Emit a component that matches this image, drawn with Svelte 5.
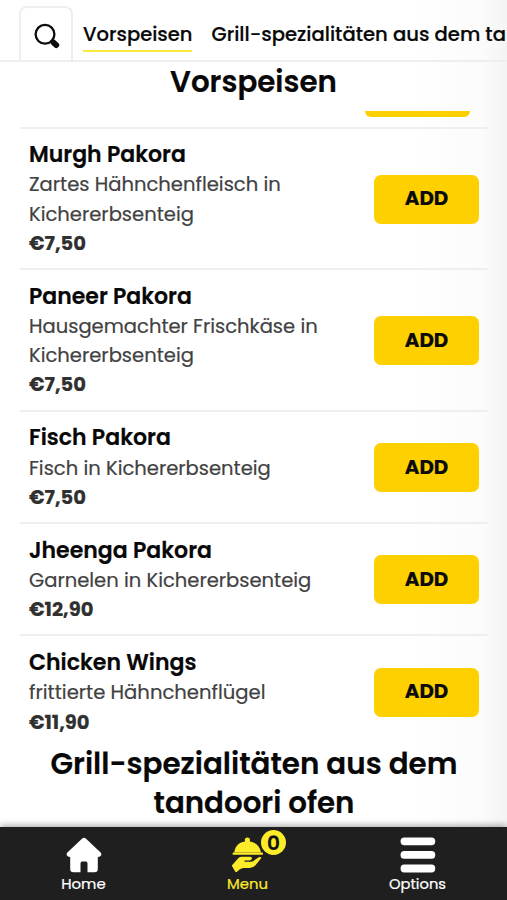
<script>
  const dishes = [
    { name: ['Murgh Pakora', 157], lines: [['Zartes Hähnchenfleisch in', 252], ['Kichererbsenteig', 165]], price: ['€7,50', 57] },
    { name: ['Paneer Pakora', 163], lines: [['Hausgemachter Frischkäse in', 289], ['Kichererbsenteig', 165]], price: ['€7,50', 57] },
    { name: ['Fisch Pakora', 142], lines: [['Fisch in Kichererbsenteig', 242]], price: ['€7,50', 57] },
    { name: ['Jheenga Pakora', 183], lines: [['Garnelen in Kichererbsenteig', 282.5]], price: ['€12,90', 64.5] },
    { name: ['Chicken Wings', 167.5], lines: [['frittierte Hähnchenflügel', 236.5]], price: ['€11,90', 60.5] }
  ];

  // Sizes the letters so that a label fills the given width.
  function fit(node, width) {
    const natural = node.getBoundingClientRect().width;
    const size = parseFloat(getComputedStyle(node).fontSize);
    node.style.fontSize = `${(size * width) / natural}px`;
  }
</script>

{#snippet label(text, width)}<span class="fit" use:fit={width}>{text}</span>{/snippet}

<div class="screen">
  <header>
    <div class="search">
      <svg width="28" height="28" viewBox="0 0 28 28" fill="none" stroke="#0c0c0c" stroke-linecap="round">
        <circle cx="12" cy="12.3" r="9.4" stroke-width="2.3" />
        <path d="M18.8 19l2 2" stroke-width="3" />
        <path d="M20.3 20.3l3 2.8" stroke-width="5.8" />
      </svg>
    </div>
    <nav class="tabs">
      <div class="tab active">{@render label('Vorspeisen', 109.5)}</div>
      <div class="tab">{@render label('Grill-spezialitäten aus dem ta', 294.5)}</div>
    </nav>
  </header>

  <h2 class="current">{@render label('Vorspeisen', 167)}</h2>

  <main>
    <div class="previous"><div class="sliver"></div></div>
    {#each dishes as dish}
      <article>
        <div class="info">
          <h3>{@render label(dish.name[0], dish.name[1])}</h3>
          {#each dish.lines as line}
            <p>{@render label(line[0], line[1])}</p>
          {/each}
          <p class="price">{@render label(dish.price[0], dish.price[1])}</p>
        </div>
        <button>{@render label('ADD', 43.5)}</button>
      </article>
    {/each}
    <h2 class="next">
      {@render label('Grill-spezialitäten aus dem', 407)}
      {@render label('tandoori ofen', 201)}
    </h2>
  </main>

  <footer>
    <div class="item home">
      <svg width="36" height="36" viewBox="0 0 36 36" fill="#fff">
        <path d="M16.2 1.5Q18 0 19.8 1.5L34.6 15.6Q36.2 17.6 34.5 19Q33.6 20 31.8 20V32Q31.8 35.2 28.6 35.2H21.5V26.4Q21.5 24.6 19.8 24.6H16.2Q14.5 24.6 14.5 26.4V35.2H7.4Q4.2 35.2 4.2 32V20Q2.4 20 1.5 19Q-.2 17.6 1.4 15.6Z" />
      </svg>
      {@render label('Home', 44.5)}
    </div>
    <div class="item menu">
      <svg width="34" height="36" viewBox="0 0 34 36" fill="#fdec2a">
        <circle cx="16.4" cy="3" r="2.6" />
        <path d="M3.2 15.6C4 8 9.7 4.3 16.4 4.3S28.8 8 30 15.6Z" />
        <rect x="1.5" y="15.4" width="30.5" height="2.4" rx="1" />
        <path d="M1.3 28L7.5 21.1Q9 19.5 11.5 19.7H19.2Q21.3 20 21 21.6Q20.7 23.3 18.5 23.4H13.5V24.8H20Q22.3 24.7 24 22.8L27.8 20.2Q30.5 19.3 30.3 21L24.5 28.2Q22 31 18.5 31H12.5Q10.4 31 8.6 32.5L5.7 35Q4.8 35.4 4.2 34.5L1.1 29.2Q.8 28.5 1.3 28Z" />
      </svg>
      <span class="badge">0</span>
      {@render label('Menu', 41)}
    </div>
    <div class="item options">
      <svg width="36" height="36" viewBox="0 0 36 36" fill="#fff">
        <rect x=".6" y=".4" width="34.6" height="7.8" rx="3.6" />
        <rect x=".6" y="14" width="34.6" height="7.8" rx="3.6" />
        <rect x=".6" y="27.6" width="34.6" height="7.8" rx="3.6" />
      </svg>
      {@render label('Options', 57)}
    </div>
  </footer>
</div>

<style>
  :global(body) { margin: 0; overflow: hidden; }
  .screen {
    box-sizing: border-box;
    width: 507px;
    height: 900px;
    overflow: hidden;
    display: flex;
    flex-direction: column;
    background: linear-gradient(90deg, #fff 410px, #fbfbfb 482px, #f4f4f4 507px);
    color: #080808;
    font-family: Poppins, Inter, "Open Sans", sans-serif;
    -webkit-text-stroke: 0.2px currentColor;
  }
  .fit { display: block; width: max-content; white-space: nowrap; }
  h2, h3, p { margin: 0; }
  header {
    flex: none;
    box-sizing: border-box;
    height: 62px;
    padding: 6px 0 0 19px;
    display: flex;
    border-bottom: 2px solid #eee;
  }
  .search {
    flex: none;
    box-sizing: border-box;
    width: 54px;
    height: 56px;
    padding: 14px 0 0 12px;
    border: 2px solid #eee;
    border-bottom: 0;
    border-radius: 8px 8px 0 0;
  }
  .search svg { display: block; }
  .tabs { display: flex; gap: 19px; margin-left: 10px; padding-top: 13px; }
  .tab {
    flex: none;
    height: 31px;
    line-height: 31px;
    font-size: 20px;
    font-weight: 500;
  }
  .active { border-bottom: 2px solid #fbe93b; }
  h2 { font-size: 29px; font-weight: 600; line-height: 39px; }
  h2 .fit { margin: 0 auto; }
  .current { flex: none; height: 49px; }
  main { flex: 1; min-height: 0; overflow: hidden; padding: 0 19px 0 20px; }
  .previous { height: 15.5px; padding-right: 18px; display: flex; justify-content: flex-end; }
  .sliver { width: 105px; height: 6px; border-radius: 0 0 7px 7px; background: #ffd000; }
  article {
    display: flex;
    justify-content: space-between;
    align-items: center;
    padding: 11.5px 9px 10.1px;
    border-top: 2px solid #efefef;
  }
  h3 { height: 30.4px; font-size: 21.5px; font-weight: 600; line-height: 29.2px; }
  p { font-size: 19.5px; line-height: 29.2px; color: #414141; }
  .price { font-weight: 700; color: #303030; }
  button {
    flex: none;
    box-sizing: border-box;
    display: flex;
    align-items: center;
    justify-content: center;
    width: 105px;
    height: 49px;
    padding: 0 0 2px;
    border: 0;
    border-radius: 7px;
    background: #ffd000;
    color: #0b0b0b;
    font: 700 19.5px Poppins, Inter, sans-serif;
  }
  .next { margin-top: -2.4px; }
  footer {
    flex: none;
    position: relative;
    box-sizing: border-box;
    height: 73.5px;
    padding: 10.5px 0 0;
    display: grid;
    grid-template-columns: 167px 161px 179px;
    background: #1f1f1f;
    box-shadow: 0 -1px 7px rgba(0, 0, 0, 0.4);
    color: #fff;
  }
  .item {
    position: relative;
    display: flex;
    flex-direction: column;
    align-items: center;
    font-size: 14.5px;
    line-height: 22px;
  }
  .item svg { display: block; }
  .menu { color: #fdec2a; }
  .badge {
    position: absolute;
    left: 94px;
    top: -7px;
    width: 25px;
    height: 25px;
    border-radius: 50%;
    background: #fdec2a;
    color: #111;
    font-size: 20px;
    font-weight: 600;
    line-height: 26px;
    text-align: center;
  }
</style>
